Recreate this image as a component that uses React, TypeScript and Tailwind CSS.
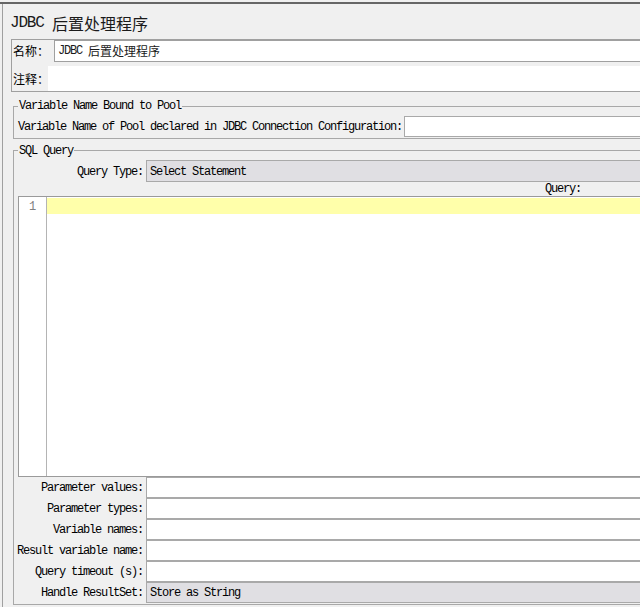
import React from 'react';

const font = "font-['Liberation_Mono','Noto_Sans_CJK_SC',monospace] tracking-[-0.1em]";

// CJK glyphs keep their natural width; only latin gets squeezed to SimSun's half-width
const Cjk = ({ children }: { children: React.ReactNode }) => (
  <span className="font-['Noto_Sans_CJK_SC',sans-serif] tracking-normal leading-none">{children}</span>
);

const Field = ({ combo, value }: { combo?: boolean; value?: string }) => (
  <div
    className={`h-[21px] border border-[#a9a9a9] flex items-center pl-[3px] pt-[1px] ${
      combo ? 'bg-[#e0dfe3]' : 'bg-white'
    }`}
  >
    {value}
  </div>
);

const Row = ({ label, combo, value }: { label: string; combo?: boolean; value?: string }) => (
  <div className="grid grid-cols-[128px_1fr] h-[21px]">
    <div className="flex items-center justify-end pr-[3px] pt-[1px] whitespace-nowrap">{label}</div>
    <Field combo={combo} value={value} />
  </div>
);

export default function App() {
  const params = [
    { label: 'Parameter values:' },
    { label: 'Parameter types:' },
    { label: 'Variable names:' },
    { label: 'Result variable name:' },
    { label: 'Query timeout (s):' },
    { label: 'Handle ResultSet:', combo: true, value: 'Store as String' },
  ];

  return (
    <div className={`w-[640px] h-[607px] overflow-hidden bg-[#f0f0f0] text-black text-[12px] leading-[14px] ${font}`}>
      <div className="pt-[2px]">
        <div className="border-t-2 border-[#666666]">
          <div className="ml-[2px] w-[700px] h-[603px] border-l border-[#a0a0a0]">
            {/* title */}
            <div className="h-[35px] pt-[3px] pl-[7px] flex items-center text-[16px] text-[#1a1a1a] whitespace-nowrap">
              JDBC&nbsp;<Cjk>后置处理程序</Cjk>
            </div>

            {/* name / comments */}
            <div className="ml-[8px] border border-[#a0a0a0]">
              <div className="flex h-[22px]">
                <div className="w-[42px] pl-[1px] flex items-center whitespace-nowrap">
                  <Cjk>名称：</Cjk>
                </div>
                <div className="flex-1 border border-[#a0a0a0] bg-white flex items-center pl-[3px] text-[#1a1a1a] whitespace-nowrap">
                  JDBC&nbsp;<Cjk>后置处理程序</Cjk>
                </div>
              </div>
              <div className="flex h-[25px] mt-[4px]">
                <div className="w-[36px] pl-[1px] flex items-center whitespace-nowrap">
                  <Cjk>注释：</Cjk>
                </div>
                <div className="flex-1 bg-white" />
              </div>
            </div>

            {/* pool */}
            <fieldset className="ml-[10px] mt-[7px] px-[4px] pb-[1px] border border-[#a8a8a8]">
              <legend className="px-[1px] h-[14px] leading-[14px]">Variable Name Bound to Pool</legend>
              <div className="pt-[3px] flex h-[24px]">
                <div className="flex items-center whitespace-nowrap">
                  Variable Name of Pool declared in JDBC Connection Configuration:
                </div>
                <div className="flex-1 ml-[2px] border border-[#a9a9a9] bg-white" />
              </div>
            </fieldset>

            {/* sql query */}
            <fieldset className="ml-[10px] mt-[4px] px-[4px] pb-[1px] border border-[#a8a8a8]">
              <legend className="px-[1px] h-[15px] leading-[16px]">SQL Query</legend>
              <div className="pt-[2px]">
                <div className="grid grid-cols-[128px_1fr] h-[22px]">
                  <div className="flex items-center justify-end pr-[3px] pt-[1px]">Query Type:</div>
                  <div className="h-[22px] border border-[#a9a9a9] bg-[#e0dfe3] flex items-center pl-[3px] pt-[1px]">
                    Select Statement
                  </div>
                </div>
                <div className="h-[14px] pl-[527px] leading-[14px]">Query:</div>

                {/* editor */}
                <div className="h-[281px] border border-[#9a9a9a] bg-white flex">
                  <div className="w-[28px] border-r border-[#b4b4b4] pt-[1px]">
                    <div className="h-[16px] pl-[10px] pt-[1px] flex items-center text-[#808080]">1</div>
                  </div>
                  <div className="flex-1 pt-[1px]">
                    <div className="h-[16px] bg-[#ffffaa]" />
                  </div>
                </div>

                {params.map((p, i) => (
                  <Row key={i} label={p.label} combo={p.combo} value={p.value} />
                ))}
              </div>
            </fieldset>
          </div>
        </div>
      </div>
    </div>
  );
}
